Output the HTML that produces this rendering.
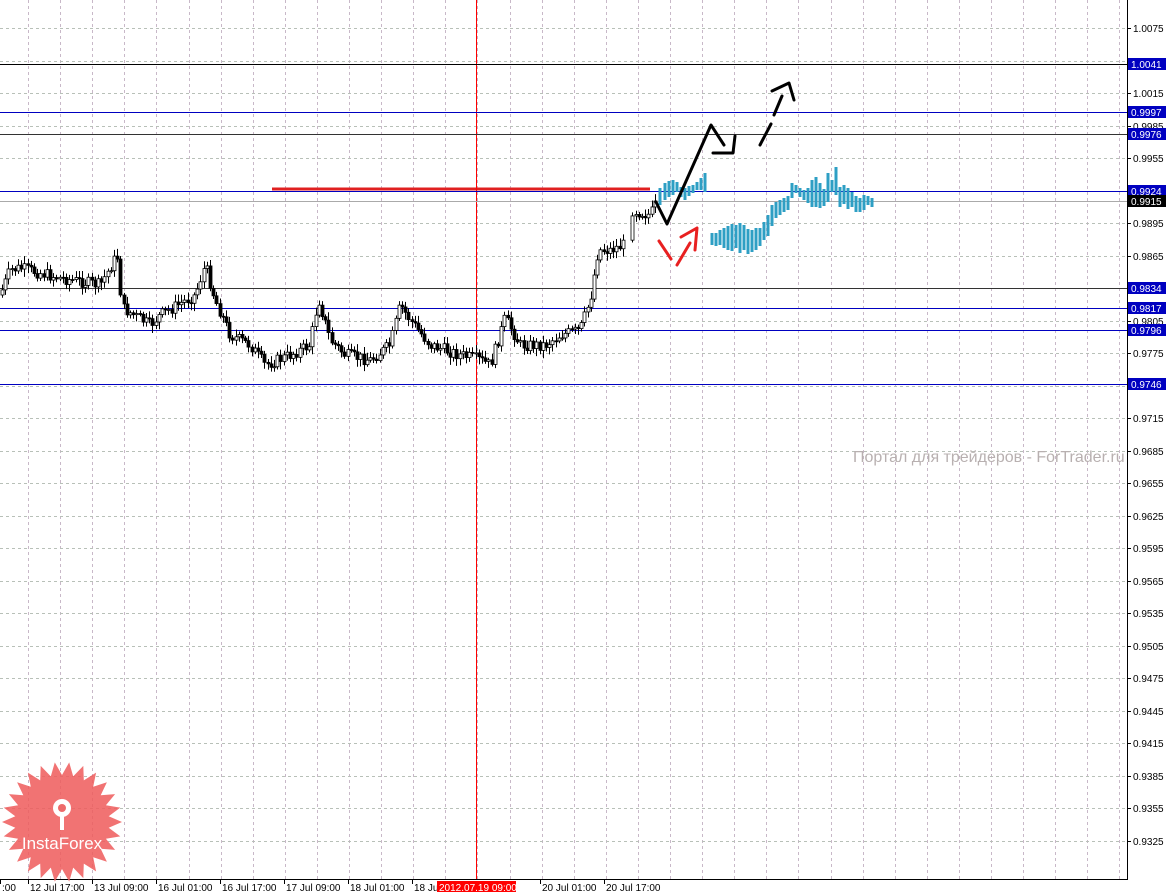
<!DOCTYPE html>
<html><head><meta charset="utf-8"><style>
html,body{margin:0;padding:0;background:#fff;width:1170px;height:892px;overflow:hidden}
svg{display:block;font-family:"Liberation Sans",sans-serif}
</style></head><body>
<svg id="s" width="1170" height="892" xmlns="http://www.w3.org/2000/svg">
<g id="grid"></g>
<g id="lines">
<line x1="272" y1="189" x2="650" y2="189" stroke="#e02020" stroke-width="3"/>
<line x1="476.5" y1="0" x2="476.5" y2="880" stroke="#ff0000" stroke-width="1"/>
<line x1="0" y1="64.5" x2="1127" y2="64.5" stroke="#000" stroke-width="1"/>
<line x1="0" y1="112.5" x2="1127" y2="112.5" stroke="#0000c0" stroke-width="1"/>
<line x1="0" y1="134.5" x2="1127" y2="134.5" stroke="#333" stroke-width="1"/>
<line x1="0" y1="191.5" x2="1127" y2="191.5" stroke="#0000c0" stroke-width="1"/>
<line x1="0" y1="201.5" x2="1127" y2="201.5" stroke="#aaa" stroke-width="1"/>
<line x1="0" y1="288.5" x2="1127" y2="288.5" stroke="#333" stroke-width="1"/>
<line x1="0" y1="308.5" x2="1127" y2="308.5" stroke="#0000c0" stroke-width="1"/>
<line x1="0" y1="330.5" x2="1127" y2="330.5" stroke="#0000c0" stroke-width="1"/>
<line x1="0" y1="384.5" x2="1127" y2="384.5" stroke="#0000c0" stroke-width="1"/>
</g>
<g id="candles"></g>
<g id="bars" fill="#2e9fc4"></g>
<g fill="none" stroke-width="3" stroke-linecap="round" stroke-linejoin="round">
<polyline points="656,202 667,224 711,125 724,145" stroke="#000"/>
<polyline points="713,153 733,153 735,136" stroke="#000"/>
<line x1="760" y1="145" x2="771" y2="124" stroke="#000"/>
<line x1="774" y1="115" x2="782" y2="96" stroke="#000"/>
<polyline points="772,91 789,83 794,100" stroke="#000"/>
<line x1="659" y1="241" x2="671" y2="259" stroke="#e82020"/>
<line x1="677" y1="265" x2="690" y2="243" stroke="#e82020"/>
<polyline points="681,237 697,228 695,250" stroke="#e82020"/>
</g>
<text x="853" y="462" font-size="16" fill="#b8b0b0">Портал для трейдеров - ForTrader.ru</text>
<g id="axis"></g>
<g transform="translate(62,822)">
<polygon id="star" fill="#ee5a5a" opacity="0.85"/>
<g fill="#fff"><circle cx="0" cy="-14" r="9"/><rect x="-2" y="-8" width="4" height="16"/></g>
<circle cx="0" cy="-14" r="4" fill="#ee6a6a"/>
<text x="0" y="27" text-anchor="middle" font-size="17" fill="#fff">InstaForex</text>
</g>
</svg>
<script>
var NS="http://www.w3.org/2000/svg";
function el(p,t,a,txt){var e=document.createElementNS(NS,t);for(var k in a)e.setAttribute(k,a[k]);if(txt)e.textContent=txt;document.getElementById(p).appendChild(e);return e;}
for(var x=28;x<1126;x+=32.1)el('grid','line',{x1:Math.round(x)+.5,y1:0,x2:Math.round(x)+.5,y2:879,stroke:'#c8b8c8','stroke-dasharray':'3,3'});
for(var i=0;i<26;i++){var p=1.0075-0.003*i;var y=Math.round(28+i*32.5);
el('grid','line',{x1:0,y1:y+.5,x2:1126,y2:y+.5,stroke:'#b8c0b8','stroke-dasharray':'3,3'});
el('axis','line',{x1:1127,y1:y+.5,x2:1131,y2:y+.5,stroke:'#000'});
el('axis','text',{x:1133,y:y+4,'font-size':'10',fill:'#000'},p.toFixed(4));}
el('axis','line',{x1:1127.5,y1:0,x2:1127.5,y2:880,stroke:'#000'});
el('axis','line',{x1:0,y1:879.5,x2:1127,y2:879.5,stroke:'#000'});
var labs=[[1.0041,64,'#0000c0'],[0.9997,112,'#0000c0'],[0.9976,134,'#0000c0'],[0.9924,191,'#0000c0'],[0.9915,201,'#000'],[0.9834,288,'#0000c0'],[0.9817,308,'#0000c0'],[0.9796,330,'#0000c0'],[0.9746,384,'#0000c0']];
labs.forEach(function(l){el('axis','rect',{x:1128,y:l[1]-6,width:38,height:12,fill:l[2]});el('axis','text',{x:1131,y:l[1]+4,'font-size':'10',fill:'#fff'},l[0].toFixed(4));});
var tl=[':00','12 Jul 17:00','13 Jul 09:00','16 Jul 01:00','16 Jul 17:00','17 Jul 09:00','18 Jul 01:00','18 Jul','','20 Jul 01:00','20 Jul 17:00'];
var tx=[0,28,92,156,220,284,348,412,476,540,604];
for(var i=0;i<tl.length;i++){if(tl[i]){el('axis','line',{x1:tx[i]+.5,y1:880,x2:tx[i]+.5,y2:884,stroke:'#000'});el('axis','text',{x:tx[i]+2,y:891,'font-size':'10',fill:'#000'},tl[i]);}}
el('axis','text',{x:502,y:891,'font-size':'10',fill:'#000'},'00');
el('axis','rect',{x:437,y:881,width:79,height:11,fill:'#f00'});
el('axis','text',{x:439,y:891,'font-size':'10',fill:'#fff'},'2012.07.19 09:00');
var kp=[[0,295],[10,270],[20,268],[60,278],[100,285],[117,255],[122,308],[150,325],[160,315],[195,295],[205,265],[215,300],[230,335],[250,345],[265,365],[290,355],[310,345],[318,298],[330,340],[345,355],[370,360],[390,345],[400,305],[410,320],[430,345],[460,355],[480,360],[490,365],[505,318],[520,345],[545,345],[560,335],[580,330],[590,300],[598,250],[610,250],[628,243],[632,210],[650,215],[655,205]];
function interp(x){for(var i=0;i<kp.length-1;i++){if(x>=kp[i][0]&&x<=kp[i+1][0]){var t=(x-kp[i][0])/(kp[i+1][0]-kp[i][0]);return kp[i][1]+t*(kp[i+1][1]-kp[i][1]);}}return 205;}
var seed=7;function rnd(){seed=(seed*9301+49297)%233280;return seed/233280;}
var prev=interp(0);
for(var x=2;x<656;x+=3.2){if(x>626&&x<631)continue;var c=interp(x)+(rnd()-.5)*12;var o=prev;var hi=Math.min(o,c)-2-rnd()*6,lo=Math.max(o,c)+2+rnd()*6;var cx=Math.round(x)+.5;
el('candles','line',{x1:cx,y1:hi,x2:cx,y2:lo,stroke:'#000'});
var bt=Math.min(o,c),h=Math.max(1,Math.abs(o-c));
el('candles','rect',{x:cx-1.5,y:bt,width:3,height:h,fill:c<o?'#fff':'#000',stroke:'#000','stroke-width':'0.8'});prev=c;}
var bp=[[660,188,205],[665,183,200],[669,181,197],[673,180,195],[677,182,192],[681,187,197],[685,188,200],[689,186,196],[693,185,193],[697,182,190],[701,178,190],[705,173,192],[712,233,245],[716,233,246],[720,230,245],[724,228,248],[728,226,250],[732,224,251],[736,225,248],[740,223,253],[744,225,250],[748,229,254],[752,230,252],[756,228,250],[760,228,246],[764,222,240],[768,215,236],[772,205,226],[776,202,218],[780,200,215],[784,198,212],[788,196,210],[792,183,198],[796,185,193],[800,188,197],[804,190,200],[808,188,203],[812,180,207],[816,177,207],[820,183,208],[824,189,206],[828,173,202],[832,180,192],[836,167,195],[840,187,207],[844,185,204],[848,188,209],[852,192,207],[856,196,212],[860,198,212],[864,195,210],[868,196,205],[872,198,207]];
bp.forEach(function(b){el('bars','rect',{x:b[0]-1.5,y:b[1],width:3,height:b[2]-b[1]});});
var pts=[];var n=26;for(var i=0;i<n*2;i++){var r=i%2?47:60;var a=i*Math.PI/n;pts.push((r*Math.cos(a)).toFixed(1)+','+(r*Math.sin(a)).toFixed(1));}
document.getElementById('star').setAttribute('points',pts.join(' '));
</script>
</body></html>
